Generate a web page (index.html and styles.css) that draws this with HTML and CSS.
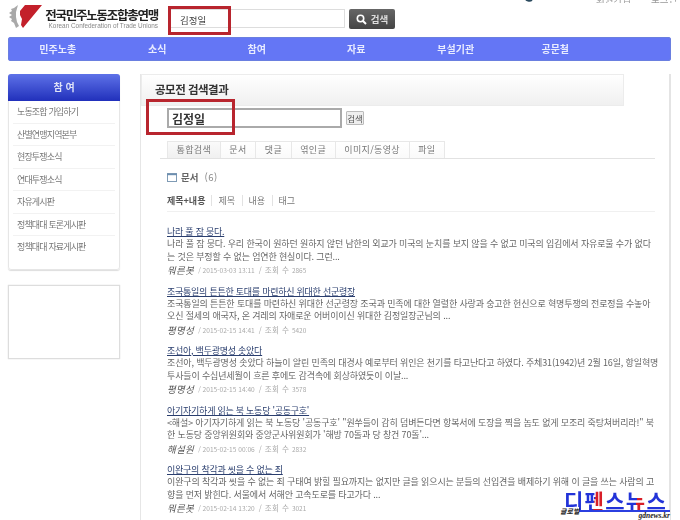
FILE: index.html
```html
<!DOCTYPE html>
<html lang="ko">
<head>
<meta charset="utf-8">
<title>공모전 검색결과</title>
<link rel="stylesheet" href="styles.css">
</head>
<body>
<div class="page">
  <div class="util">
    <svg class="util-icon" width="12" height="12" viewBox="0 0 12 12"><path d="M10 9 A5 5 0 0 1 3 7" fill="none" stroke="#2b4a5e" stroke-width="2"/></svg>
    <span class="util-links"><span>회원가입</span><span>로그인</span></span>
  </div>
  <header class="top">
    <div class="logo">
      <svg class="logo-mark" width="34" height="26" viewBox="0 0 34 26">
        <path d="M9 1 L5 4 L2 5 L3 7 L0 9 L3 11 L0 13 L3 15 L2 17 L5 19 L7 24 L10 22 L8 18 L7 13 L7 8 Z" fill="#a9a9a9"/>
        <path d="M16 1 L33 1 L14 24 L12 21 L13 15 L11 11 L11 7 Z" fill="#c3202b"/>
      </svg>
      <div class="logo-text">
        <div class="logo-ko">전국민주노동조합총연맹</div>
        <div class="logo-en">Korean Confederation of Trade Unions</div>
      </div>
    </div>
    <div class="top-search">
      <div class="top-input">김정일</div>
      <div class="top-btn">
        <svg width="11" height="11" viewBox="0 0 11 11"><circle cx="4.5" cy="4.5" r="3.2" fill="none" stroke="#fff" stroke-width="1.6"/><path d="M7 7 L10 10" stroke="#fff" stroke-width="2"/></svg>
        <span>검색</span>
      </div>
    </div>
  </header>
  <nav class="gnb">
    <span>민주노총</span><span>소식</span><span>참여</span><span>자료</span><span>부설기관</span><span>공문철</span>
  </nav>
  <div class="layout">
    <aside class="side">
      <div class="side-box">
        <h2 class="side-title">참 여</h2>
        <ul class="side-list">
          <li>노동조합 가입하기</li>
          <li>산별연맹지역본부</li>
          <li>현장투쟁소식</li>
          <li>연대투쟁소식</li>
          <li>자유게시판</li>
          <li>정책대대 토론게시판</li>
          <li>정책대대 자료게시판</li>
        </ul>
      </div>
      <div class="side-empty"></div>
    </aside>
    <main class="main">
      <h1 class="main-head">공모전 검색결과</h1>
      <div class="search-row">
        <div class="search-input">김정일</div>
        <div class="search-btn">검색</div>
      </div>
      <div class="tabs">
        <span class="tab tab-on">통합검색</span><span class="tab">문서</span><span class="tab">댓글</span><span class="tab">엮인글</span><span class="tab">이미지/동영상</span><span class="tab">파일</span>
      </div>
      <div class="doc-head">
        <svg width="10" height="9" viewBox="0 0 10 9"><rect x=".5" y=".5" width="9" height="8" fill="#fff" stroke="#7f9bb5"/><path d="M0 1.5 H10" stroke="#6d8fb0" stroke-width="1.4"/></svg>
        <b>문서</b><span>(6)</span>
      </div>
      <div class="filters">
        <b>제목+내용</b><span>제목</span><span>내용</span><span>태그</span>
      </div>
      <article class="item">
        <a class="item-title">나라 풀 잠 뭉다.</a>
        <p>나라 풀 잠 뭉다. 우리 한국이 원하던 원하지 않던 남한의 외교가 미국의 눈치를 보지 않을 수 없고 미국의 입김에서 자유로울 수가 없다<br>는 것은 부정할 수 없는 엄연한 현실이다. 그런...</p>
        <div class="meta"><i>뭐른봇</i><span>/ 2015-03-03 13:11</span><span class="hits">/ 조회 수 <em>2865</em></span></div>
      </article>
      <article class="item">
        <a class="item-title">조국통일의 튼튼한 토대를 마련하신 위대한 선군령장</a>
        <p>조국통일의 튼튼한 토대를 마련하신 위대한 선군령장 조국과 민족에 대한 열렬한 사랑과 숭고한 헌신으로 혁명투쟁의 전로정을 수놓아<br>오신 절세의 애국자, 온 겨레의 자애로운 어버이이신 위대한 김정일장군님의 ...</p>
        <div class="meta"><i>평명성</i><span>/ 2015-02-15 14:41</span><span class="hits">/ 조회 수 <em>5420</em></span></div>
      </article>
      <article class="item">
        <a class="item-title">조선아, 백두광명성 솟았다</a>
        <p>조선아, 백두광명성 솟았다 하늘이 알린 민족의 대경사 예로부터 위인은 천기를 타고난다고 하였다. 주체31(1942)년 2월 16일, 항일혁명<br>투사들이 수십년세월이 흐른 후에도 감격속에 회상하였듯이 이날...</p>
        <div class="meta"><i>평명성</i><span>/ 2015-02-15 14:40</span><span class="hits">/ 조회 수 <em>3578</em></span></div>
      </article>
      <article class="item">
        <a class="item-title">아기자기하게 읽는 북 노동당 '공동구호'</a>
        <p>&lt;해설&gt; 아기자기하게 읽는 북 노동당 '공동구호' "원쑤들이 감히 덤벼든다면 항복서에 도장을 찍을 놈도 없게 모조리 죽탕쳐버리라!" 북<br>한 노동당 중앙위원회와 중앙군사위원회가 '해방 70돌과 당 창건 70돌'...</p>
        <div class="meta"><i>해설원</i><span>/ 2015-02-15 00:06</span><span class="hits">/ 조회 수 <em>2832</em></span></div>
      </article>
      <article class="item">
        <a class="item-title">이완구의 착각과 씻을 수 없는 죄</a>
        <p>이완구의 착각과 씻을 수 없는 죄 구태여 밝힐 필요까지는 없지만 글을 읽으시는 분들의 선입견을 배제하기 위해 이 글을 쓰는 사람의 고<br>향을 먼저 밝힌다. 서울에서 서해안 고속도로를 타고가다 ...</p>
        <div class="meta"><i>뭐른봇</i><span>/ 2015-02-14 13:20</span><span class="hits">/ 조회 수 <em>3021</em></span></div>
      </article>
    </main>
  </div>
</div>
<div class="mark mark-top"></div>
<div class="mark mark-main"></div>
<div class="wm">
  <div class="wm-ko">디펜스뉴스</div>
  <div class="wm-bar"></div>
  <span class="wm-global">글로벌</span>
  <span class="wm-url">gdnews.kr</span>
</div>
</body>
</html>
```
FILE: styles.css
```css
* { box-sizing: border-box; }
html, body { margin: 0; height: 520px; overflow: hidden; background: #fff; }
body {
  position: relative;
  font-family: "Noto Sans CJK KR", "Liberation Sans", sans-serif;
  color: #555;
  font-size: 9.5px;
}
h1, h2, p, ul { margin: 0; padding: 0; }
ul { list-style: none; }

.page { width: 680px; height: 520px; padding-left: 8px; filter: blur(0.35px); }

.util { height: 3px; overflow: hidden; display: flex; align-items: flex-end; padding-left: 514px; }
.util-icon { flex: none; }
.util-links { display: flex; gap: 20px; margin-left: 62px; color: #999; line-height: 8px; }

.top { height: 34px; display: flex; }
.logo { width: 160px; display: flex; }
.logo-mark { margin: 1px 0 0 1px; flex: none; }
.logo-text { margin-left: 1px; padding-top: 5px; text-align: right; width: 114px; }
.logo-ko { font-size: 12.5px; font-weight: 700; color: #222; letter-spacing: -1.25px; line-height: 13px; white-space: nowrap; }
.logo-en { font-family: "Liberation Sans", sans-serif; font-size: 6.4px; color: #888; line-height: 9px; white-space: nowrap; }

.top-search { display: flex; gap: 4px; padding-top: 6px; }
.top-input { width: 177px; height: 19px; border: 1px solid #ddd; padding-left: 11px; font-size: 9.5px; line-height: 21px; color: #444; }
.top-btn {
  width: 46px; height: 20px; display: flex; align-items: center; justify-content: center; gap: 4px;
  border-radius: 2px; background: linear-gradient(#666, #444); color: #ddd; font-weight: 700; font-size: 9.5px;
}

.gnb {
  width: 663px; height: 24px; display: grid; grid-template-columns: repeat(6, 99.5px);
  background: #6476f5; border-radius: 3px; box-shadow: inset 0 0 0 1px #6a7fe0; color: #e8ebff;
  font-weight: 700; font-size: 10px; text-align: center; line-height: 23px;
}

.layout { display: flex; padding-top: 13px; }

.side { width: 132px; flex: none; }
.side-box { width: 112px; height: 196px; border: 1px solid #e6e6e6; border-radius: 3px; box-shadow: 0 1px 1px #ddd; }
.side-title {
  margin: -1px -1px 0; height: 27px; background: linear-gradient(#5e72e8, #2130bb); border-radius: 3px 3px 0 0;
  color: #dfe3f7; text-align: center; font-size: 10px; line-height: 25px; font-weight: 700;
}
.side-list { padding: 0 4px; }
.side-list li { height: 22.5px; padding-left: 4px; line-height: 22px; border-bottom: 1px solid #f2f2f2; color: #777; letter-spacing: -0.85px; font-size: 9px; white-space: nowrap; }
.side-list li:last-child { border-bottom: 0; }
.side-empty { width: 112px; height: 74px; margin-top: 15px; border: 1px solid #ddd; box-shadow: 0 0 1px #ccc; }

.main { width: 531px; height: 460px; overflow: hidden; border-left: 1px solid #e6e6e6; border-right: 2px solid #e4e4e4; }
.main-head {
  width: 483px; height: 32px; border: 1px solid #ececec; background: linear-gradient(#fff, #f0f0f0);
  padding-left: 13px; font-size: 11.5px; letter-spacing: -0.5px; font-weight: 700; color: #333; line-height: 28px;
}
.search-row { display: flex; gap: 4px; align-items: center; margin: 2px 0 0 26px; }
.search-input { width: 175px; height: 20px; border: 2px solid #aaa; padding-left: 3px; font-size: 12px; font-weight: 700; color: #333; line-height: 17px; }
.search-btn { width: 18px; height: 14px; border: 1px solid #bbb; background: #eee; font-size: 8.5px; line-height: 12px; text-align: center; color: #555; border-radius: 1px; }

.tabs { display: flex; width: 495px; margin: 13px 0 0 19px; padding-left: 7px; border-bottom: 1px solid #e2e2e2; height: 18px; }
.tab { height: 17px; padding: 0 8.6px; border: 1px solid #e8e8e8; border-left: 0; border-bottom: 0; line-height: 16px; color: #777; font-size: 9px; letter-spacing: .35px; background: linear-gradient(#fff, #fafafa); white-space: nowrap; }
.tab-on { border-left: 1px solid #e8e8e8; background: linear-gradient(#fafafa, #f0f0f0); }

.doc-head { display: flex; align-items: center; gap: 4px; margin: 12px 0 0 26px; height: 12px; font-size: 9.5px; color: #666; }
.doc-head b { color: #666; }
.doc-head span { color: #888; margin-left: 2px; letter-spacing: .5px; }

.filters { display: flex; margin: 12px 0 0 26px; width: 488px; height: 17px; border-bottom: 1px solid #f0f0f0; font-size: 9px; color: #777; line-height: 12px; }
.filters b { color: #555; padding-right: 6px; }
.filters span { padding: 0 6.5px 0 6px; height: 11px; border-left: 1px solid #e2e2e2; }

.item { width: 490px; margin-left: 26px; height: 59.5px; }
.filters + .item { margin-top: 13px; }
.item-title { display: block; height: 13px; color: #2a3e6e; text-decoration: underline; line-height: 13px; font-size: 9px; letter-spacing: -0.25px; white-space: nowrap; }
.item p { line-height: 12.7px; color: #666; white-space: nowrap; font-size: 9px; letter-spacing: -0.14px; }
.meta { display: flex; gap: 4px; align-items: center; height: 14px; color: #aaa; font-size: 6.6px; line-height: 14px; }
.meta i { color: #555; font-size: 9.5px; letter-spacing: .3px; }
.hits { font-size: 7.6px; letter-spacing: .4px; }
.hits em { font-style: normal; font-size: 6.5px; letter-spacing: 0; }

.mark { position: absolute; border: 3px solid #b8252e; }
.mark-top { left: 168px; top: 6px; width: 63px; height: 29px; }
.mark-main { left: 146px; top: 99px; width: 89px; height: 36px; }

.wm { position: absolute; left: 560px; top: 488px; width: 112px; height: 32px; overflow: hidden; }
.wm-ko {
  position: absolute; left: 4px; top: 3px; font-size: 21px; font-weight: 700; letter-spacing: 1.3px; line-height: 19px;
  white-space: nowrap; background: linear-gradient(100deg, #2233d8 0 30%, #d81e28 30% 42%, #2233d8 42% 70%, #d81e28 70% 78%, #2233d8 78% 100%);
  -webkit-background-clip: text; background-clip: text; color: transparent;
}
.wm-bar { position: absolute; left: 14px; top: 22px; width: 96px; height: 2px; background: #2b3fe0; }
.wm-global { position: absolute; left: 0; top: 19px; font-size: 7px; font-weight: 700; font-style: italic; color: #222; line-height: 9px; background: #fff; }
.wm-url { position: absolute; right: 2px; top: 24px; font-family: "Liberation Serif", serif; font-size: 7.5px; font-weight: 700; font-style: italic; color: #222; line-height: 8px; background: #fff; }
```
